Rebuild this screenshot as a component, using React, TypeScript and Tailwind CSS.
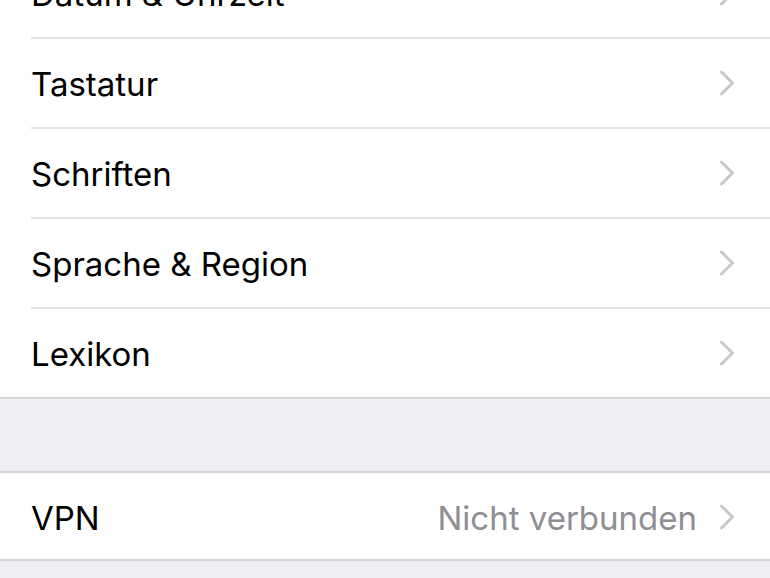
const general = ["Datum & Uhrzeit", "Tastatur", "Schriften", "Sprache & Region", "Lexikon"];

const Chevron = () => (
  <svg width="16" height="26" viewBox="0 0 16 26" className="shrink-0">
    <path
      d="M2.5 2 L13.5 13 L2.5 24"
      fill="none"
      stroke="#c7c7cc"
      strokeWidth="3"
      strokeLinecap="round"
      strokeLinejoin="round"
    />
  </svg>
);

const Row = ({ label, value, last }: { label: string; value?: string; last?: boolean }) => (
  <div className={`flex pl-[31px] ${last ? "h-[88px]" : "h-[90px]"}`}>
    <div
      className={`flex flex-1 items-center pr-[35px] ${
        last ? "" : "border-b-2 border-[#e3e3e6]"
      }`}
    >
      <span className="flex-1 pt-[3px] text-[33px] text-black">{label}</span>
      {value && <span className="mr-[22px] pt-[3px] text-[33px] text-[#8e8e93]">{value}</span>}
      <Chevron />
    </div>
  </div>
);

export default function App() {
  return (
    <div
      className="h-[578px] w-[770px] overflow-hidden bg-[#efeff4]"
      style={{ fontFamily: "Inter, 'Liberation Sans', Arial, sans-serif" }}
    >
      <div className="-mt-[51px] border-b-2 border-[#d6d6da] bg-white">
        {general.map((label, i) => (
          <Row key={label} label={label} last={i === general.length - 1} />
        ))}
      </div>

      <div className="h-[72px]" />

      <div className="border-y-2 border-[#d6d6da] bg-white">
        <div className="h-[86px]">
          <Row label="VPN" value="Nicht verbunden" last />
        </div>
      </div>
    </div>
  );
}
